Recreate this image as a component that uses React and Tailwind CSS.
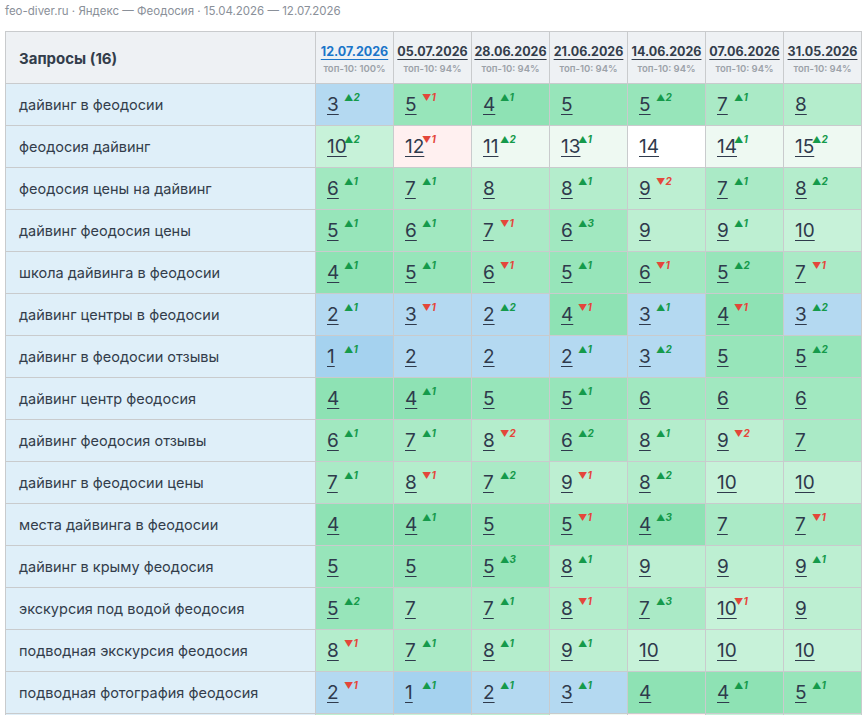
import React from "react";

const dates = [
  { d: "12.07.2026", top: "100%", active: true },
  { d: "05.07.2026", top: "94%" },
  { d: "28.06.2026", top: "94%" },
  { d: "21.06.2026", top: "94%" },
  { d: "14.06.2026", top: "94%" },
  { d: "07.06.2026", top: "94%" },
  { d: "31.05.2026", top: "94%" },
];

// [position, change] ; change > 0 = up, < 0 = down
const rows = [
  ["дайвинг в феодосии", [[3, 2], [5, -1], [4, 1], [5, 0], [5, 2], [7, 1], [8, 0]]],
  ["феодосия дайвинг", [[10, 2], [12, -1], [11, 2], [13, 1], [14, 0], [14, 1], [15, 2]]],
  ["феодосия цены на дайвинг", [[6, 1], [7, 1], [8, 0], [8, 1], [9, -2], [7, 1], [8, 2]]],
  ["дайвинг феодосия цены", [[5, 1], [6, 1], [7, -1], [6, 3], [9, 0], [9, 1], [10, 0]]],
  ["школа дайвинга в феодосии", [[4, 1], [5, 1], [6, -1], [5, 1], [6, -1], [5, 2], [7, -1]]],
  ["дайвинг центры в феодосии", [[2, 1], [3, -1], [2, 2], [4, -1], [3, 1], [4, -1], [3, 2]]],
  ["дайвинг в феодосии отзывы", [[1, 1], [2, 0], [2, 0], [2, 1], [3, 2], [5, 0], [5, 2]]],
  ["дайвинг центр феодосия", [[4, 0], [4, 1], [5, 0], [5, 1], [6, 0], [6, 0], [6, 0]]],
  ["дайвинг феодосия отзывы", [[6, 1], [7, 1], [8, -2], [6, 2], [8, 1], [9, -2], [7, 0]]],
  ["дайвинг в феодосии цены", [[7, 1], [8, -1], [7, 2], [9, -1], [8, 2], [10, 0], [10, 0]]],
  ["места дайвинга в феодосии", [[4, 0], [4, 1], [5, 0], [5, -1], [4, 3], [7, 0], [7, -1]]],
  ["дайвинг в крыму феодосия", [[5, 0], [5, 0], [5, 3], [8, 1], [9, 0], [9, 0], [9, 1]]],
  ["экскурсия под водой феодосия", [[5, 2], [7, 0], [7, 1], [8, -1], [7, 3], [10, -1], [9, 0]]],
  ["подводная экскурсия феодосия", [[8, -1], [7, 1], [8, 1], [9, 1], [10, 0], [10, 0], [10, 0]]],
  ["подводная фотография феодосия", [[2, -1], [1, 1], [2, 1], [3, 1], [4, 0], [4, 1], [5, 1]]],
  ["дайвинг феодосия", [[9, 1], [10, -1], [9, 0], [11, 1], [12, -2], [10, 0], [10, 1]]],
];

const cellBg = (pos, ch) => {
  if (pos === 1) return "bg-[#a5d2ef]";
  if (pos <= 3) return "bg-[#b4d9f1]";
  if (pos === 4) return "bg-[#8ee2b4]";
  if (pos === 5) return "bg-[#97e5ba]";
  if (pos === 6) return "bg-[#a1e8c0]";
  if (pos === 7) return "bg-[#aaeac6]";
  if (pos === 8) return "bg-[#b4edcc]";
  if (pos === 9) return "bg-[#bdefd2]";
  if (pos === 10) return "bg-[#c7f2d9]";
  if (ch > 0) return "bg-[#eef9f2]";
  if (ch < 0) return "bg-[#fff0f0]";
  return "bg-white";
};

const Cell = ({ pos, ch }) => (
  <td className={"relative border border-[#c9cbcd] pl-[11px] align-middle " + cellBg(pos, ch)}>
    <span className="text-[19px] leading-none text-[#2f3a4c] underline decoration-1 underline-offset-[3px]">
      {pos}
    </span>
    {ch !== 0 && (
      <span
        className={
          "absolute left-[28px] top-[8px] text-[10px] font-bold italic leading-none " +
          (ch > 0 ? "text-[#159a4b]" : "text-[#e4463a]")
        }
      >
        <span className="not-italic text-[9px]">{ch > 0 ? "▲" : "▼"}</span>
        {Math.abs(ch)}
      </span>
    )}
  </td>
);

export default function App() {
  return (
    <div className="bg-white px-[5px] font-['Inter','Noto_Sans',sans-serif]">
      <div className="h-[31px] pt-[2px] text-[11.5px] leading-[18px] text-[#8a9099]">
        feo-diver.ru · Яндекс — Феодосия · 15.04.2026 — 12.07.2026
      </div>
      <table className="w-[856px] table-fixed border-collapse">
        <colgroup>
          <col className="w-[310px]" />
          {dates.map((d) => (
            <col key={d.d} className="w-[78px]" />
          ))}
        </colgroup>
        <thead>
          <tr className="h-[52px] bg-[#eef1f4]">
            <th className="border border-[#c9cbcd] pl-[13px] pt-[3px] text-left text-[15px] font-bold text-[#333d4b]">
              Запросы (16)
            </th>
            {dates.map((d) => (
              <th key={d.d} className="border border-[#c9cbcd] pt-[4px] text-center align-middle">
                <div
                  className={
                    "text-[12.5px] font-bold leading-[16px] underline decoration-1 underline-offset-[3px] " +
                    (d.active ? "text-[#1b75c9]" : "text-[#333d4b]")
                  }
                >
                  {d.d}
                </div>
                <div className="mt-[3px] text-[9.5px] font-semibold leading-[12px] text-[#9ca2a9]">
                  топ-10: {d.top}
                </div>
              </th>
            ))}
          </tr>
        </thead>
        <tbody>
          {rows.map(([q, cells]) => (
            <tr key={q} className="h-[42px]">
              <td className="border border-[#c9cbcd] bg-[#dfeff9] pl-[13px] text-[14.5px] text-[#333d4b]">
                {q}
              </td>
              {cells.map(([pos, ch], i) => (
                <Cell key={i} pos={pos} ch={ch} />
              ))}
            </tr>
          ))}
        </tbody>
      </table>
    </div>
  );
}
